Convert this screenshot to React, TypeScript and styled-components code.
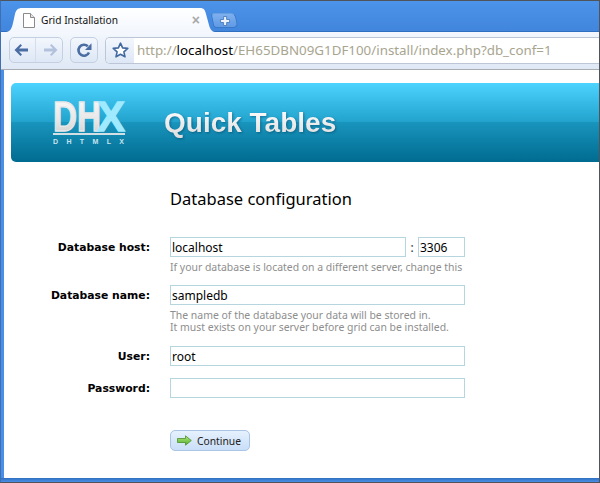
import React from 'react'
import styled, { createGlobalStyle } from 'styled-components'

const GlobalStyle = createGlobalStyle`
  html, body {
    margin: 0;
    padding: 0;
    background: #fff;
    overflow: hidden;
  }
  * {
    box-sizing: border-box;
  }
`

const Window = styled.div`
  display: flex;
  flex-direction: column;
  width: 600px;
  height: 483px;
  background: #4a8fe6;
  border: 1px solid #505458;
  border-left-color: #3f6fb0;
  font-family: 'DejaVu Sans', sans-serif;
`

const TabStrip = styled.div`
  display: flex;
  align-items: flex-start;
  flex-shrink: 0;
  height: 31px;
  padding: 7px 0 0 5px;
  background: linear-gradient(#4c93ea, #4186dc);
  border-bottom: 1px solid #2f6fbf;
`

const Tab = styled.div`
  display: flex;
  align-items: center;
  width: 209px;
  height: 24px;
  padding: 0 15px 0 17px;
  gap: 6px;
  background: linear-gradient(#fff, #f3f7fd);
  clip-path: path('M0 24 C4 24 6 20 7 15 L9 6 C10 2 12 0 16 0 L194 0 C198 0 199 2 200 6 L203 17 C204 21 206 24 209 24 Z');
`

const TabTitle = styled.span`
  flex: 1;
  font-family: 'Noto Sans', sans-serif;
  font-size: 10.2px;
  color: #111;
`

const TabClose = styled.span`
  font-family: 'Liberation Sans', sans-serif;
  font-size: 14px;
  font-weight: bold;
  color: #a9a9a9;
`

const NewTab = styled.div`
  display: flex;
  align-items: center;
  justify-content: center;
  width: 25px;
  height: 15px;
  margin: 5px 0 0 -3px;
  background: linear-gradient(#7fb0ef, #5f9ae4);
  border: 1px solid #3a78c8;
  border-top-color: #6a9fe0;
  border-radius: 4px 5px 5px 3px;
  transform: skewX(12deg);
`

const Toolbar = styled.div`
  display: flex;
  align-items: center;
  flex-shrink: 0;
  height: 38px;
  padding: 0 0 1px 8px;
  gap: 7px;
  background: linear-gradient(#f4f8fe, #f0f5fc 14%, #dfe8f5 100%);
  border-bottom: 1px solid #a9adb3;
`

const ButtonGroup = styled.div<{ $width: number }>`
  display: flex;
  align-items: center;
  justify-content: space-around;
  flex-shrink: 0;
  width: ${p => p.$width}px;
  height: 26px;
  background: linear-gradient(#f3f7fd, #dde7f5);
  border: 1px solid #c4d0e2;
  border-radius: 5px;
`

const Divider = styled.span`
  width: 1px;
  height: 24px;
  background: #d3dded;
`

const Omnibox = styled.div`
  display: flex;
  flex: 1;
  min-width: 0;
  height: 27px;
  border: 1px solid #bcc6d6;
  border-right: none;
  border-radius: 5px 0 0 5px;
  background: #fff;
  overflow: hidden;
`

const StarCell = styled.div`
  display: flex;
  align-items: center;
  justify-content: center;
  flex-shrink: 0;
  width: 28px;
  background: linear-gradient(#f3f7fd, #dde7f5);
`

const Url = styled.div`
  padding-left: 3px;
  font-family: 'Noto Sans', sans-serif;
  font-size: 13.35px;
  line-height: 25px;
  white-space: nowrap;
  color: #a8a58f;
`

const Host = styled.span`
  color: #000;
`

const Page = styled.div`
  flex: 1;
  min-height: 0;
  padding: 13px 0 0 7px;
  margin-left: 3px;
  background: #fff;
  overflow: hidden;
`

const Banner = styled.div`
  display: flex;
  align-items: center;
  height: 79px;
  padding-left: 42px;
  gap: 38px;
  border-radius: 5px 0 0 5px;
  background: linear-gradient(#4dd3ff 0%, #21a3cd 49%, #1994bd 50%, #006b90 100%);
`

const BannerTitle = styled.h1`
  margin: 0;
  font-family: 'Liberation Sans', sans-serif;
  font-size: 28px;
  font-weight: bold;
  background: linear-gradient(#fff, #dcdcdc);
  -webkit-background-clip: text;
  background-clip: text;
  color: transparent;
  filter: drop-shadow(1px 1px 1px rgba(0, 50, 80, 0.45));
`

const Form = styled.div`
  display: flex;
  flex-direction: column;
  padding: 27px 0 0 0;
`

const FormTitle = styled.h2`
  margin: 0 0 28px 159px;
  font-family: 'Noto Sans', sans-serif;
  font-size: 16.5px;
  font-weight: 400;
  line-height: 20px;
  color: #000;
`

const Field = styled.div<{ $gap?: number }>`
  display: grid;
  grid-template-columns: 139px 295px;
  column-gap: 20px;
  margin-bottom: ${p => p.$gap ?? 12}px;
`

const Label = styled.label`
  height: 20px;
  padding-top: 1px;
  font-family: 'DejaVu Sans', sans-serif;
  font-size: 10.8px;
  font-weight: bold;
  line-height: 20px;
  text-align: right;
  white-space: nowrap;
  color: #000;
`

const InputRow = styled.div`
  display: flex;
  align-items: center;
`

const Input = styled.input<{ $width?: number }>`
  display: block;
  width: ${p => (p.$width ? `${p.$width}px` : '100%')};
  height: 20px;
  padding: 0 1px;
  border: 1px solid #b5d5df;
  outline: none;
  border-radius: 0;
  background: #fff;
  font-family: 'Noto Sans', sans-serif;
  font-size: 12px;
  color: #000;
`

const Colon = styled.span`
  width: 12px;
  font-family: 'Noto Sans', sans-serif;
  font-size: 12px;
  text-align: center;
  color: #333;
`

const Hint = styled.div`
  margin-top: 4px;
  font-family: 'Noto Sans', sans-serif;
  font-size: 10.45px;
  line-height: 12px;
  white-space: nowrap;
  color: #8e8e8e;
`

const ContinueButton = styled.button`
  display: flex;
  align-items: center;
  gap: 5px;
  width: 80px;
  height: 21px;
  margin: 20px 0 0 159px;
  padding: 0 0 0 6px;
  border: 1px solid #a9c4e4;
  border-radius: 5px;
  background: linear-gradient(#e6f1fd, #c9def8);
  font-family: 'Noto Sans', sans-serif;
  font-size: 10.3px;
  color: #222;
`

const BottomEdge = styled.div`
  flex-shrink: 0;
  height: 4px;
  background: linear-gradient(#2f6fc0, #4a8fe6);
`

const PageIcon = () => (
  <svg width="12" height="15" viewBox="0 0 12 15">
    <path d="M0.5 0.5 H7.5 L11.5 4.5 V14.5 H0.5 Z" fill="#fff" stroke="#8a8a8a" />
    <path d="M7.5 0.5 V4.5 H11.5" fill="#e4e4e4" stroke="#8a8a8a" />
  </svg>
)

const BackIcon = () => (
  <svg width="16" height="14" viewBox="0 0 16 14">
    <path d="M7.5 1 L1.5 7 L7.5 13 L9 11.5 L6 8.6 H15 V5.4 H6 L9 2.5 Z" fill="#4a6da3" />
  </svg>
)

const ForwardIcon = () => (
  <svg width="16" height="14" viewBox="0 0 16 14">
    <path d="M8.5 1 L14.5 7 L8.5 13 L7 11.5 L10 8.6 H1 V5.4 H10 L7 2.5 Z" fill="#b3c2dc" />
  </svg>
)

const ReloadIcon = () => (
  <svg width="16" height="16" viewBox="0 0 16 16">
    <path d="M13 10.5 A5.5 5.5 0 1 1 11.8 4.2" fill="none" stroke="#4a6da3" strokeWidth="2.6" />
    <path d="M15.5 1.2 V8 H9 Z" fill="#4a6da3" />
  </svg>
)

const StarIcon = () => (
  <svg width="17" height="16" viewBox="0 0 17 16">
    <path
      d="M8.5 1.2 L10.6 5.9 L15.8 6.4 L11.9 9.8 L13 14.8 L8.5 12.2 L4 14.8 L5.1 9.8 L1.2 6.4 L6.4 5.9 Z"
      fill="#fff"
      stroke="#41699f"
      strokeWidth="1.6"
      strokeLinejoin="round"
    />
  </svg>
)

const PlusIcon = () => (
  <svg width="10" height="10" viewBox="0 0 10 10" style={{ transform: 'skewX(-12deg)' }}>
    <path d="M3.5 0.5 H6.5 V3.5 H9.5 V6.5 H6.5 V9.5 H3.5 V6.5 H0.5 V3.5 H3.5 Z" fill="#eef4fd" stroke="#3f72b5" strokeWidth="0.8" />
  </svg>
)

const ArrowIcon = () => (
  <svg width="15" height="11" viewBox="0 0 15 11">
    <defs>
      <linearGradient id="arrowFill" x1="0" y1="0" x2="0" y2="1">
        <stop offset="0" stopColor="#b5ea7a" />
        <stop offset="1" stopColor="#4fae2c" />
      </linearGradient>
    </defs>
    <path d="M0.5 3.5 H8.5 V0.8 L14.3 5.5 L8.5 10.2 V7.5 H0.5 Z" fill="url(#arrowFill)" stroke="#4d8f2d" strokeWidth="0.8" />
  </svg>
)

const DhxLogo = () => (
  <svg width="73" height="46" viewBox="0 0 73 46">
    <defs>
      <linearGradient id="logoGrey" x1="0" y1="0" x2="0" y2="1">
        <stop offset="0" stopColor="#ffffff" />
        <stop offset="0.6" stopColor="#e6e6e6" />
        <stop offset="1" stopColor="#c9c9c9" />
      </linearGradient>
    </defs>
    <text x="0" y="31" fontFamily="Liberation Sans" fontWeight="bold" fontSize="43" textLength="48" lengthAdjust="spacingAndGlyphs" fill="url(#logoGrey)" stroke="#e8e8e8" strokeWidth="1.3">
      DH
    </text>
    <text x="44" y="31" fontFamily="Liberation Sans" fontWeight="bold" fontSize="43" textLength="28" lengthAdjust="spacingAndGlyphs" fill="#9feaff" stroke="#9feaff" strokeWidth="1.3">
      X
    </text>
    <rect x="0" y="33" width="72" height="2" fill="#d4dfe4" />
    <text x="0" y="44" fontFamily="Liberation Sans" fontWeight="bold" fontSize="7" textLength="71" fill="#c9e4ee">
      DHTMLX
    </text>
  </svg>
)

export default function App() {
  return (
    <>
      <GlobalStyle />
      <Window>
        <TabStrip>
          <Tab>
            <PageIcon />
            <TabTitle>Grid Installation</TabTitle>
            <TabClose>×</TabClose>
          </Tab>
          <NewTab>
            <PlusIcon />
          </NewTab>
        </TabStrip>
        <Toolbar>
          <ButtonGroup $width={54}>
            <BackIcon />
            <Divider />
            <ForwardIcon />
          </ButtonGroup>
          <ButtonGroup $width={28}>
            <ReloadIcon />
          </ButtonGroup>
          <Omnibox>
            <StarCell>
              <StarIcon />
            </StarCell>
            <Url>
              http://<Host>localhost</Host>/EH65DBN09G1DF100/install/index.php?db_conf=1
            </Url>
          </Omnibox>
        </Toolbar>
        <Page>
          <Banner>
            <DhxLogo />
            <BannerTitle>Quick Tables</BannerTitle>
          </Banner>
          <Form>
            <FormTitle>Database configuration</FormTitle>
            <Field>
              <Label>Database host:</Label>
              <div>
                <InputRow>
                  <Input $width={236} defaultValue="localhost" />
                  <Colon>:</Colon>
                  <Input $width={47} defaultValue="3306" />
                </InputRow>
                <Hint>If your database is located on a different server, change this</Hint>
              </div>
            </Field>
            <Field $gap={13}>
              <Label>Database name:</Label>
              <div>
                <Input defaultValue="sampledb" />
                <Hint>
                  The name of the database your data will be stored in.
                  <br />
                  It must exists on your server before grid can be installed.
                </Hint>
              </div>
            </Field>
            <Field>
              <Label>User:</Label>
              <Input defaultValue="root" />
            </Field>
            <Field>
              <Label>Password:</Label>
              <Input type="password" />
            </Field>
            <ContinueButton>
              <ArrowIcon />
              Continue
            </ContinueButton>
          </Form>
        </Page>
        <BottomEdge />
      </Window>
    </>
  )
}
